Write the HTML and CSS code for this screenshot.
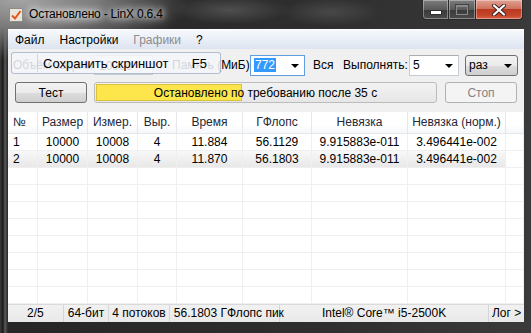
FILE: index.html
```html
<!DOCTYPE html>
<html>
<head>
  <title>Остановлено - LinX 0.6.4</title>
  <link rel="stylesheet" href="styles.css">
</head>
<body>
  <div class="window">
    <div class="titlebar">
      <svg class="app-icon" width="14" height="14" viewBox="0 0 14 14">
        <rect x="0.5" y="0.5" width="13" height="13" fill="#e9e4dc" stroke="#8d8a86"/>
        <path d="M3 7.5 L6 10.5 L11.5 3" fill="none" stroke="#e2571c" stroke-width="2"/>
      </svg>
      <span class="title">Остановлено - LinX 0.6.4</span>
      <div class="caption-buttons">
        <div class="cap cap-min"><span class="min-bar"></span></div>
        <div class="cap cap-max"><span class="max-box"></span></div>
        <div class="cap cap-close">
          <svg width="16" height="12" viewBox="0 0 16 12">
            <path d="M3 1.5 L13 10.5 M13 1.5 L3 10.5" stroke="#3a2020" stroke-width="4" stroke-linecap="round"/>
            <path d="M3 1.5 L13 10.5 M13 1.5 L3 10.5" stroke="#ffffff" stroke-width="2.2" stroke-linecap="round"/>
          </svg>
        </div>
      </div>
    </div>

    <div class="client">
      <div class="menubar">
        <span class="menu-item">Файл</span>
        <span class="menu-item">Настройки</span>
        <span class="menu-item disabled">Графики</span>
        <span class="menu-item">?</span>
      </div>

      <div class="panel">
        <div class="row row-params">
          <span class="label lbl-size">Объём задачи</span>
          <div class="spin">10000</div>
          <span class="label lbl-mem">Память (МиБ):</span>
          <div class="combo combo-mem focused"><span class="sel">772</span><span class="arrow"></span></div>
          <span class="label lbl-all">Вся</span>
          <span class="label lbl-run">Выполнять:</span>
          <div class="combo combo-runs"><span>5</span><span class="arrow"></span></div>
          <div class="combo combo-unit"><span>раз</span><span class="arrow"></span></div>

          <div class="popup">
            <span class="popup-gutter"></span>
            <span class="popup-text">Сохранить скриншот</span>
            <span class="popup-key">F5</span>
          </div>
        </div>

        <div class="row row-actions">
          <div class="button btn-test">Тест</div>
          <div class="progress">
            <div class="progress-fill" style="width: 43%"></div>
            <span class="progress-text">Остановлено по требованию после 35 с</span>
          </div>
          <div class="button btn-stop disabled">Стоп</div>
        </div>
      </div>

      <div class="grid">
        <div class="grid-row grid-head">
          <div class="cell left">№</div>
          <div class="cell">Размер</div>
          <div class="cell">Измер.</div>
          <div class="cell">Выр.</div>
          <div class="cell">Время</div>
          <div class="cell">ГФлопс</div>
          <div class="cell">Невязка</div>
          <div class="cell">Невязка (норм.)</div>
          <div class="cell"></div>
        </div>
        <div class="grid-row">
          <div class="cell left">1</div>
          <div class="cell">10000</div>
          <div class="cell">10008</div>
          <div class="cell">4</div>
          <div class="cell">11.884</div>
          <div class="cell">56.1129</div>
          <div class="cell">9.915883e-011</div>
          <div class="cell">3.496441e-002</div>
          <div class="cell"></div>
        </div>
        <div class="grid-row selected">
          <div class="cell left">2</div>
          <div class="cell">10000</div>
          <div class="cell">10008</div>
          <div class="cell">4</div>
          <div class="cell">11.870</div>
          <div class="cell">56.1803</div>
          <div class="cell">9.915883e-011</div>
          <div class="cell">3.496441e-002</div>
          <div class="cell"></div>
        </div>
        <div class="grid-row empty"><div class="cell"></div><div class="cell"></div><div class="cell"></div><div class="cell"></div><div class="cell"></div><div class="cell"></div><div class="cell"></div><div class="cell"></div><div class="cell"></div></div>
        <div class="grid-row empty"><div class="cell"></div><div class="cell"></div><div class="cell"></div><div class="cell"></div><div class="cell"></div><div class="cell"></div><div class="cell"></div><div class="cell"></div><div class="cell"></div></div>
        <div class="grid-row empty"><div class="cell"></div><div class="cell"></div><div class="cell"></div><div class="cell"></div><div class="cell"></div><div class="cell"></div><div class="cell"></div><div class="cell"></div><div class="cell"></div></div>
        <div class="grid-row empty"><div class="cell"></div><div class="cell"></div><div class="cell"></div><div class="cell"></div><div class="cell"></div><div class="cell"></div><div class="cell"></div><div class="cell"></div><div class="cell"></div></div>
        <div class="grid-row empty"><div class="cell"></div><div class="cell"></div><div class="cell"></div><div class="cell"></div><div class="cell"></div><div class="cell"></div><div class="cell"></div><div class="cell"></div><div class="cell"></div></div>
        <div class="grid-row empty"><div class="cell"></div><div class="cell"></div><div class="cell"></div><div class="cell"></div><div class="cell"></div><div class="cell"></div><div class="cell"></div><div class="cell"></div><div class="cell"></div></div>
        <div class="grid-row empty"><div class="cell"></div><div class="cell"></div><div class="cell"></div><div class="cell"></div><div class="cell"></div><div class="cell"></div><div class="cell"></div><div class="cell"></div><div class="cell"></div></div>
        <div class="grid-row empty"><div class="cell"></div><div class="cell"></div><div class="cell"></div><div class="cell"></div><div class="cell"></div><div class="cell"></div><div class="cell"></div><div class="cell"></div><div class="cell"></div></div>
      </div>

      <div class="statusbar">
        <div class="status s-pass">2/5</div>
        <div class="status s-bits">64-бит</div>
        <div class="status s-threads">4 потоков</div>
        <div class="status s-peak">56.1803 ГФлопс пик</div>
        <div class="status s-cpu">Intel® Core™ i5-2500K</div>
        <div class="status s-log">Лог &gt;</div>
      </div>
    </div>
  </div>
</body>
</html>
```

FILE: styles.css
```css
body {
  margin: 0;
  width: 531px;
  height: 333px;
  overflow: hidden;
  font-family: "Liberation Sans", Arial, sans-serif;
  font-size: 12px;
  color: #000000;
}

.window {
  width: 531px;
  height: 333px;
  display: flex;
  flex-direction: column;
  background:
    radial-gradient(ellipse 170px 60px at 20px 0px, #a4a4a4 0%, #7a7a7a 45%, rgba(60,60,60,0) 100%),
    radial-gradient(ellipse 60px 14px at 230px 10px, rgba(120,120,120,.45), rgba(0,0,0,0)),
    radial-gradient(ellipse 50px 14px at 330px 12px, rgba(110,110,110,.4), rgba(0,0,0,0)),
    linear-gradient(to right, #3c3c3c 0px, #1a1a1a 3px, #5a5a5a 5px, #262626 8px, #2e2e2e 60%, #3a3a3a 100%);
}

/* title bar */

.titlebar {
  height: 29px;
  display: flex;
  align-items: flex-start;
  padding-left: 9px;
  position: relative;
}

.app-icon {
  margin-top: 8px;
}

.title {
  margin-left: 6px;
  margin-top: 7px;
  letter-spacing: -0.2px;
  color: #000000;
  text-shadow: 0 0 6px #ffffff, 0 0 10px #ffffff, 0 0 14px rgba(255,255,255,.8);
}

.caption-buttons {
  margin-left: auto;
  margin-right: 8px;
  display: flex;
}

.cap {
  height: 19px;
  border: 1px solid #2a2a2a;
  border-top: none;
  box-shadow: inset 0 0 0 1px rgba(255,255,255,.35);
  display: flex;
  align-items: center;
  justify-content: center;
}

.cap-min {
  width: 25px;
  border-radius: 0 0 0 4px;
  background: linear-gradient(#7c7c7c, #5a5a5a 50%, #3a3a3a 52%, #4c4c4c);
}

.cap-max {
  width: 26px;
  border-left: none;
  background: linear-gradient(#7c7c7c, #5a5a5a 50%, #3a3a3a 52%, #4c4c4c);
}

.cap-close {
  width: 46px;
  border-left: none;
  border-radius: 0 0 4px 0;
  background: linear-gradient(#e0a194, #d0735d 45%, #b93a22 50%, #c6452a 80%, #d8654a);
}

.min-bar {
  width: 10px;
  height: 3px;
  margin-top: 5px;
  background: #ffffff;
  border: 1px solid #303030;
}

.max-box {
  width: 10px;
  height: 7px;
  border: 1px solid #8a8a8a;
  border-top-width: 2px;
  box-shadow: 0 0 0 1px #444444;
}

/* client area */

.client {
  margin: 0 7px 0 8px;
  height: 293px;
  background: #f0f0f0;
  display: flex;
  flex-direction: column;
}

.menubar {
  height: 20px;
  display: flex;
  align-items: center;
  padding-left: 7px;
  background: linear-gradient(#f6f8fc, #dde4f1);
  border-top: 1px solid #ffffff;
  box-sizing: border-box;
}

.menu-item {
  padding: 0 7px 0 0;
  margin-right: 8px;
}

.menu-item.disabled {
  color: #8d8d8d;
}

.panel {
  height: 63px;
  box-sizing: border-box;
  padding-top: 6px;
}

.row {
  display: flex;
  align-items: center;
}

.row-params {
  height: 20px;
  position: relative;
}

.label {
  white-space: nowrap;
}

.lbl-size {
  margin-left: 5px;
  width: 81px;
  color: #000000;
}

.spin {
  width: 59px;
  height: 20px;
  box-sizing: border-box;
  border: 1px solid #c6ccd6;
  background: #ffffff;
  padding: 3px 4px;
}

.lbl-mem {
  margin-left: 19px;
  width: 78px;
}

.combo {
  height: 21px;
  box-sizing: border-box;
  border: 1px solid #c5ccd6;
  border-top-color: #abadb3;
  background: #ffffff;
  display: flex;
  align-items: center;
  padding-left: 3px;
  position: relative;
}

.arrow {
  position: absolute;
  right: 5px;
  top: 8px;
  width: 0;
  height: 0;
  border-left: 4px solid transparent;
  border-right: 4px solid transparent;
  border-top: 4px solid #000000;
}

.combo-mem {
  width: 55px;
}

.combo.focused {
  border-color: #5f9fe0;
}

.sel {
  background: #3399ff;
  color: #ffffff;
  padding: 0 1px;
}

.lbl-all {
  margin-left: 8px;
  width: 30px;
}

.lbl-run {
  width: 66px;
}

.combo-runs {
  width: 50px;
}

.combo-unit {
  margin-left: 6px;
  width: 53px;
  border: 1px solid #707070;
  border-radius: 3px;
  background: linear-gradient(#f2f2f2, #ebebeb 50%, #dddddd 51%, #cfcfcf);
}

.popup {
  position: absolute;
  left: 3px;
  top: -3px;
  width: 210px;
  height: 22px;
  box-sizing: border-box;
  border: 1px solid rgba(150,165,190,.7);
  border-radius: 3px;
  background: rgba(244,246,250,.86);
  display: flex;
  align-items: center;
}

.popup-gutter {
  position: absolute;
  left: 25px;
  top: 1px;
  bottom: 1px;
  border-left: 1px solid rgba(200,205,215,.8);
}

.popup-text {
  margin-left: 31px;
  font-size: 13px;
}

.popup-key {
  margin-left: auto;
  margin-right: 13px;
  font-size: 13px;
}

.row-actions {
  margin-top: 7px;
  height: 21px;
}

.button {
  width: 72px;
  height: 21px;
  box-sizing: border-box;
  border: 1px solid #707070;
  border-radius: 3px;
  background: linear-gradient(#f2f2f2, #ebebeb 50%, #dddddd 51%, #cfcfcf);
  display: flex;
  align-items: center;
  justify-content: center;
}

.btn-test {
  margin-left: 7px;
}

.btn-stop {
  margin-left: 8px;
}

.button.disabled {
  border-color: #adb2b5;
  background: #f4f4f4;
  color: #838383;
}

.progress {
  margin-left: 7px;
  width: 343px;
  height: 21px;
  box-sizing: border-box;
  border: 1px solid #bcbcbc;
  border-radius: 3px;
  background: linear-gradient(#f3f3f3, #e6e6e6);
  padding: 1px;
  position: relative;
}

.progress-fill {
  height: 100%;
  box-sizing: border-box;
  background: #fce64c;
  border: 1px solid #d8c23c;
}

.progress-text {
  position: absolute;
  left: 0;
  right: 0;
  top: 3px;
  text-align: center;
}

/* results grid */

.grid {
  height: 192px;
  background: #ffffff;
}

.grid-row {
  display: grid;
  grid-template-columns: 30px 50px 50px 39px 66px 69px 96px 98px 18px;
  height: 17px;
  box-sizing: border-box;
  border-bottom: 1px solid #efefef;
}

.cell {
  border-right: 1px solid #efefef;
  text-align: center;
  white-space: nowrap;
  line-height: 16px;
}

.cell.left {
  text-align: left;
  padding-left: 5px;
}

.grid-head {
  height: 22px;
  background: linear-gradient(#ffffff, #ffffff 60%, #f6f7f9);
  border-bottom: 1px solid #e4e7ec;
  color: #1e2838;
}

.grid-head .cell {
  line-height: 21px;
  border-right-color: #e4e7ec;
}

.grid-row.selected {
  background: linear-gradient(to right, rgba(0,0,0,0) 0, rgba(0,0,0,0) 100%),
    linear-gradient(#f8f8f8, #e8e8e8);
  background-size: 100% 100%, 497px 100%;
  background-repeat: no-repeat;
}

.grid-row.selected .cell:last-child {
  background: #ffffff;
}

/* status bar */

.statusbar {
  height: 18px;
  box-sizing: border-box;
  border-top: 1px solid #dadada;
  background: linear-gradient(#f1f1f1, #e9e9e9);
  display: flex;
}

.status {
  border-right: 1px solid #d5d5d5;
  text-align: center;
  line-height: 16px;
  white-space: nowrap;
}

.s-pass { width: 55px; }
.s-bits { width: 45px; }
.s-threads { width: 60px; }
.s-peak { width: 110px; text-align: left; padding-left: 4px; box-sizing: border-box; }
.s-cpu { width: 210px; }
.s-log { width: 35px; border-right: none; }
```
